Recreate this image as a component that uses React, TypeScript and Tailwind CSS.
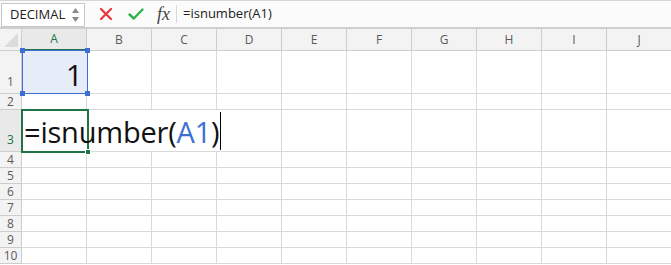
import React from "react";

const cols = ["A", "B", "C", "D", "E", "F", "G", "H", "I", "J"];
const rowHeights = [43, 16, 42, 16, 16, 16, 16, 16, 16, 16];

function FormulaBar() {
  return (
    <div className="h-[29px] flex items-center bg-[#fbfbfb] border-t border-[#d6d6d6] border-b-[2px] border-b-[#cfcfcf] relative">
      <div className="ml-[1px] mt-[1px] w-[84px] h-[24px] border border-[#c8c8c8] bg-white flex items-center justify-between pl-[8px] pr-[4px]">
        <span className="text-[13px] text-[#222]" style={{ fontFamily: '"Open Sans", sans-serif' }}>DECIMAL</span>
        <svg width="9" height="18" viewBox="0 0 9 18">
          <path d="M4.5 2 L8 7 L1 7 Z" fill="#8a8a8a" />
          <path d="M4.5 16 L8 11 L1 11 Z" fill="#8a8a8a" />
        </svg>
      </div>
      <div className="ml-[14px] flex items-center">
        <svg width="14" height="14" viewBox="0 0 14 14">
          <path d="M2 2 L12 12 M12 2 L2 12" stroke="#e8363a" strokeWidth="2.2" strokeLinecap="round" />
        </svg>
      </div>
      <div className="ml-[15px] flex items-center">
        <svg width="16" height="14" viewBox="0 0 16 14">
          <path d="M1.5 7.5 L5.8 11.5 L14.5 2.5" stroke="#2fb34a" strokeWidth="2.4" fill="none" strokeLinecap="round" strokeLinejoin="round" />
        </svg>
      </div>
      <div
        className="ml-[13px] text-[18px] italic text-[#444] leading-none"
        style={{ fontFamily: '"Liberation Serif", serif' }}
      >
        fx
      </div>
      <div className="ml-[6px] w-px h-[18px] bg-[#d8d8d8]" />
      <div className="ml-[6px] text-[13px] text-[#222]" style={{ fontFamily: '"Open Sans", sans-serif' }}>
        =isnumber(A1)
      </div>
    </div>
  );
}

export default function App() {
  const font = { fontFamily: '"Open Sans", sans-serif' };
  return (
    <div className="w-[671px] h-[265px] overflow-hidden bg-white relative">
      <FormulaBar />
      <div
        className="grid grid-cols-[22px_repeat(10,65px)] grid-rows-[22px_43px_16px_42px_repeat(7,16px)] relative"
        style={font}
      >
        {/* corner */}
        <div className="bg-[#f3f3f3] border-r border-b border-[#cdcdcd] relative overflow-hidden">
          <svg className="absolute left-[4px] top-[4px]" width="14" height="14" viewBox="0 0 14 14">
            <path d="M14 0 L14 14 L0 14 Z" fill="#dcdcdc" />
          </svg>
        </div>
        {cols.map((c, i) => (
          <div
            key={c}
            className={
              i === 0
                ? "bg-[#e9e9e9] border-r border-[#cdcdcd] border-b-[2px] border-b-[#217346] flex items-center justify-center text-[12px] text-[#217346] font-medium"
                : "bg-[#f3f3f3] border-r border-b border-[#cdcdcd] flex items-center justify-center text-[12px] text-[#5a5a5a]"
            }
          >
            {c}
          </div>
        ))}
        {rowHeights.map((h, r) => (
          <React.Fragment key={r}>
            <div
              className={
                (r === 2
                  ? "bg-[#e9e9e9] border-r border-b border-[#cdcdcd] flex items-end justify-center text-[12px] text-[#217346] font-medium"
                  : "bg-[#f3f3f3] border-r border-b border-[#cdcdcd] flex items-end justify-center text-[12px] text-[#5a5a5a]") +
                (h > 20 ? " pb-[4px]" : " pb-0")
              }
            >
              <span className="leading-[15px]">{r + 1}</span>
            </div>
            {cols.map((c, ci) => {
              const hideRight = r === 2 && ci <= 2;
              return (
                <div
                  key={c}
                  className={
                    hideRight
                      ? "border-b border-[#d9d9d9] relative"
                      : "border-r border-b border-[#d9d9d9] relative"
                  }
                >
                  {r === 0 && ci === 0 && (
                    <div className="absolute left-[0px] top-[-1px] w-[66px] h-[44px] border-[1.5px] border-[#3c6fd2] bg-[#e7edf8] flex items-end justify-end pr-[4px] pb-[3px] z-10">
                      <span className="text-[30px] leading-none text-[#111] font-medium">1</span>
                      <div className="absolute -left-[3px] -top-[3px] w-[5px] h-[5px] bg-[#3c6fd2]" />
                      <div className="absolute -right-[3px] -top-[3px] w-[5px] h-[5px] bg-[#3c6fd2]" />
                      <div className="absolute -left-[3px] -bottom-[3px] w-[5px] h-[5px] bg-[#3c6fd2]" />
                      <div className="absolute -right-[3px] -bottom-[3px] w-[5px] h-[5px] bg-[#3c6fd2]" />
                    </div>
                  )}
                  {r === 2 && ci === 0 && (
                    <>
                      <div className="absolute left-[-1px] top-[-1px] w-[68px] h-[44px] border-2 border-[#1f7345] z-10">
                        <div className="absolute -right-[4px] -bottom-[4px] w-[6px] h-[6px] bg-[#1f7345] border border-white" />
                      </div>
                      <div className="absolute left-[2px] top-[1px] h-[40px] flex items-center whitespace-nowrap z-20">
                        <span className="text-[29px] leading-none text-[#111] font-medium tracking-[-0.2px]">
                          =isnumber(<span className="text-[#3c6fd2]">A1</span>)
                        </span>
                        <span className="ml-[1px] w-px h-[38px] bg-black" />
                      </div>
                    </>
                  )}
                </div>
              );
            })}
          </React.Fragment>
        ))}
      </div>
    </div>
  );
}
